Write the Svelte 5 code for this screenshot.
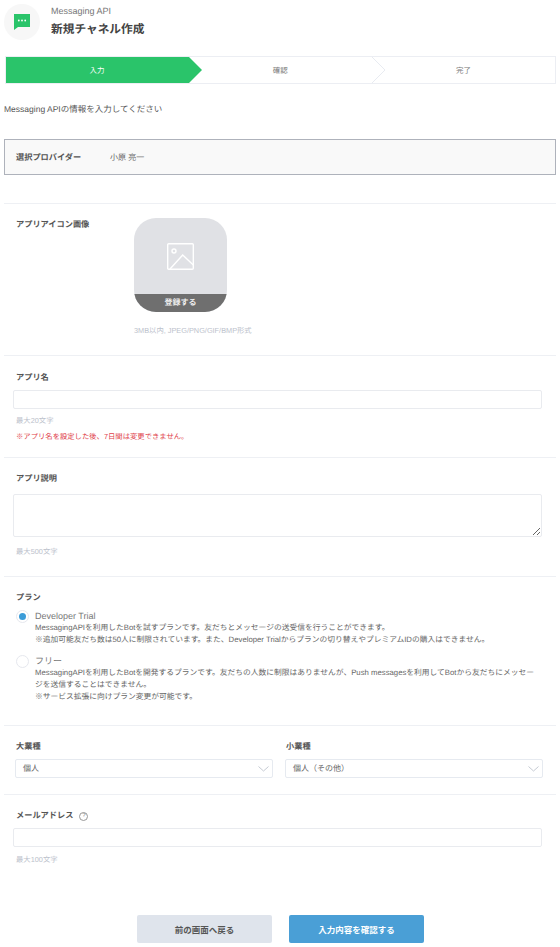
<script>
	const steps = [
		{ label: '入力', active: true },
		{ label: '確認', active: false },
		{ label: '完了', active: false }
	];
</script>

<div class="page">
	<header class="head">
		<div class="logo">
			<svg width="16" height="16" viewBox="0 0 16 16" aria-hidden="true">
				<path d="M0 0H16V13H4L0 16Z" fill="#2ac46a" />
				<circle cx="4.8" cy="6.5" r="0.9" fill="#fff" />
				<circle cx="8" cy="6.5" r="0.9" fill="#fff" />
				<circle cx="11.2" cy="6.5" r="0.9" fill="#fff" />
			</svg>
		</div>
		<div>
			<div class="head-sub">Messaging API</div>
			<h1>新規チャネル作成</h1>
		</div>
	</header>

	<div class="steps">
		{#each steps as step, i}
			<div class="step" class:active={step.active}>
				<span>{step.label}</span>
				{#if i === 0}
					<svg class="tip" width="13" height="26" viewBox="0 0 13 26" aria-hidden="true">
						<path d="M0 0L13 13L0 26Z" fill="#2ac46a" />
					</svg>
				{:else if i === 1}
					<svg class="tip" width="13" height="26" viewBox="0 0 13 26" aria-hidden="true">
						<path d="M0 0L13 13L0 26" fill="#fff" stroke="#e8ebf1" />
					</svg>
				{/if}
			</div>
		{/each}
	</div>

	<p class="lead">Messaging APIの情報を入力してください</p>

	<div class="provider">
		<span class="provider-label">選択プロバイダー</span>
		<span class="provider-name">小原 亮一</span>
	</div>

	<section class="sec sec-icon">
		<div class="label">アプリアイコン画像</div>
		<div>
			<div class="tile">
				<div class="tile-body">
					<svg width="27" height="27" viewBox="0 0 27 27" fill="none" stroke="#fff" stroke-width="1.4" aria-hidden="true">
						<rect x="0.7" y="0.7" width="25.6" height="25.6" rx="1" />
						<circle cx="7" cy="8" r="2" />
						<path d="M3 26L15.7 12L26.3 22" />
					</svg>
				</div>
				<div class="tile-band">登録する</div>
			</div>
			<div class="hint tile-hint">3MB以内, JPEG/PNG/GIF/BMP形式</div>
		</div>
	</section>

	<section class="sec sec-name">
		<div class="label">アプリ名</div>
		<input class="field" type="text" />
		<div class="hint">最大20文字</div>
		<div class="warn">※アプリ名を設定した後、7日間は変更できません。</div>
	</section>

	<section class="sec sec-desc">
		<div class="label">アプリ説明</div>
		<textarea class="field area"></textarea>
		<div class="hint">最大500文字</div>
	</section>

	<section class="sec sec-plan">
		<div class="label">プラン</div>
		<div class="plan">
			<span class="radio on"></span>
			<div class="plan-text">
				<div class="plan-name">Developer Trial</div>
				<div>MessagingAPIを利用したBotを試すプランです。友だちとメッセージの送受信を行うことができます。</div>
				<div>※追加可能友だち数は50人に制限されています。また、Developer Trialからプランの切り替えやプレミアムIDの購入はできません。</div>
			</div>
		</div>
		<div class="plan plan-free">
			<span class="radio"></span>
			<div class="plan-text">
				<div class="plan-name">フリー</div>
				<div>MessagingAPIを利用したBotを開発するプランです。友だちの人数に制限はありませんが、Push messagesを利用してBotから友だちにメッセージを送信することはできません。</div>
				<div>※サービス拡張に向けプラン変更が可能です。</div>
			</div>
		</div>
	</section>

	<section class="sec sec-biz">
		<div class="col">
			<div class="label">大業種</div>
			<div class="select">
				<span>個人</span>
				<svg width="11" height="6" viewBox="0 0 11 6" fill="none" stroke="#c5cad3" aria-hidden="true"><path d="M0.5 0.5L5.5 5L10.5 0.5" /></svg>
			</div>
		</div>
		<div class="col">
			<div class="label">小業種</div>
			<div class="select">
				<span>個人（その他）</span>
				<svg width="11" height="6" viewBox="0 0 11 6" fill="none" stroke="#c5cad3" aria-hidden="true"><path d="M0.5 0.5L5.5 5L10.5 0.5" /></svg>
			</div>
		</div>
	</section>

	<section class="sec sec-mail">
		<div class="label label-help">
			メールアドレス
			<span class="help">?</span>
		</div>
		<input class="field" type="text" />
		<div class="hint">最大100文字</div>
	</section>

	<div class="actions">
		<button type="button" class="btn btn-back">前の画面へ戻る</button>
		<button type="button" class="btn btn-next">入力内容を確認する</button>
	</div>
</div>

<style>
	:global(body) {
		background: #fff;
	}
	.page {
		width: 560px;
		height: 947px;
		overflow: hidden;
		font-family: 'Liberation Sans', 'Noto Sans CJK JP', sans-serif;
		font-size: 8px;
		color: #555;
		text-rendering: geometricPrecision;
	}
	.head {
		display: flex;
		align-items: flex-start;
		gap: 11px;
		padding: 4px 4px 0;
		height: 52px;
		box-sizing: border-box;
	}
	.logo {
		display: flex;
		align-items: center;
		justify-content: center;
		width: 36px;
		height: 36px;
		border-radius: 50%;
		background: #f7f7f7;
	}
	.head-sub {
		margin-top: 2px;
		font-size: 9px;
		line-height: 11px;
		color: #777;
	}
	h1 {
		margin: 5px 0 0;
		font-size: 11.7px;
		line-height: 16px;
		font-weight: 700;
		color: #444;
	}
	.steps {
		display: flex;
		margin: 4px 4px 0 4.5px;
		height: 28px;
		box-sizing: border-box;
		border: 1px solid #eceef3;
	}
	.step {
		position: relative;
		flex: 1;
		display: flex;
		align-items: center;
		justify-content: center;
		font-size: 7.5px;
		color: #777;
	}
	.step.active {
		background: #2ac46a;
		color: #fff;
	}
	.tip {
		position: absolute;
		top: 0;
		left: 100%;
		z-index: 1;
	}
	.lead {
		margin: 19px 0 0 4px;
		font-size: 8.5px;
		line-height: 12px;
		color: #555;
	}
	.provider {
		display: flex;
		align-items: center;
		height: 36px;
		margin: 24px 4px 0;
		padding-left: 11px;
		box-sizing: border-box;
		border: 1px solid #aeb2bb;
		background: #f9f9f9;
	}
	.provider-label {
		width: 94px;
		font-weight: 700;
		font-size: 8.2px;
		color: #555;
	}
	.provider-name {
		font-size: 8px;
		color: #666;
	}
	.sec {
		margin: 0 4px;
		padding-left: 9px;
		padding-right: 14px;
		border-top: 1px solid #eef0f4;
		box-sizing: border-box;
	}
	.label {
		margin-left: 3px;
		font-size: 8.2px;
		line-height: 12px;
		font-weight: 700;
		color: #555;
	}
	.hint {
		margin-left: 3px;
		font-size: 7.33px;
		line-height: 10px;
		color: #bcc2cc;
	}
	.field {
		display: block;
		width: 529px;
		height: 19px;
		box-sizing: border-box;
		margin: 0;
		padding: 0 6px;
		background: #fff;
		border: 1px solid #e9ebef;
		border-radius: 2px;
		outline: none;
	}
	.area {
		height: 43px;
		resize: vertical;
	}
	.sec-icon {
		display: flex;
		margin-top: 28px;
		height: 152px;
		padding-top: 14px;
	}
	.sec-icon .label {
		width: 118px;
		margin-top: 1px;
		flex: none;
	}
	.tile {
		width: 93px;
		height: 94px;
		border-radius: 22px;
		overflow: hidden;
		display: flex;
		flex-direction: column;
		background: #e0e1e5;
	}
	.tile-body {
		flex: 1;
		display: flex;
		align-items: center;
		justify-content: center;
		padding-top: 1px;
	}
	.tile-band {
		height: 18px;
		line-height: 18px;
		text-align: center;
		font-size: 8px;
		font-weight: 700;
		color: #eee;
		background: #6f6f6f;
	}
	.tile-hint {
		margin: 14px 0 0;
	}
	.sec-name {
		height: 102px;
		padding-top: 16px;
	}
	.sec-name .field {
		margin-top: 6px;
	}
	.sec-name .hint {
		margin-top: 7px;
	}
	.warn {
		margin: 6px 0 0 3px;
		font-size: 7.33px;
		line-height: 10px;
		color: #e0404a;
	}
	.sec-desc {
		height: 119px;
		padding-top: 15px;
	}
	.sec-desc .field {
		margin-top: 9px;
	}
	.sec-desc .hint {
		margin-top: 10px;
	}
	.sec-plan {
		height: 149px;
		padding-top: 15px;
		padding-right: 0;
	}
	.plan {
		position: relative;
		margin-top: 6px;
		padding-left: 22px;
	}
	.plan-free {
		margin-top: 8.5px;
	}
	.plan-text {
		width: 503px;
		font-size: 7.75px;
		line-height: 12px;
		color: #666;
	}
	.plan-name {
		font-size: 9px;
		line-height: 12px;
		color: #777;
	}
	.radio {
		position: absolute;
		left: 3px;
		top: 0;
		width: 13px;
		height: 13px;
		box-sizing: border-box;
		border: 1px solid #e6e8ee;
		border-radius: 50%;
		background: #fff;
	}
	.radio.on::after {
		content: '';
		position: absolute;
		left: 2px;
		top: 2px;
		width: 7px;
		height: 7px;
		border-radius: 50%;
		background: #3b9cd8;
	}
	.sec-biz {
		display: flex;
		gap: 12px;
		height: 69px;
		padding: 15px 0 0 11px;
	}
	.col {
		width: 258px;
	}
	.col .label {
		margin-left: 1px;
	}
	.select {
		display: flex;
		align-items: center;
		justify-content: space-between;
		height: 19px;
		margin-top: 6px;
		padding: 0 2px 0 7px;
		box-sizing: border-box;
		background: #fff;
		border: 1px solid #e6eaf0;
		border-radius: 2px;
		font-size: 8px;
		color: #666;
	}
	.select svg {
		margin-right: 1px;
	}
	.sec-mail {
		padding-top: 15px;
	}
	.label-help {
		display: flex;
		align-items: center;
		gap: 6px;
	}
	.help {
		width: 9px;
		height: 9px;
		box-sizing: border-box;
		border: 1px solid #999;
		border-radius: 50%;
		font-size: 6px;
		line-height: 7px;
		font-weight: 400;
		text-align: center;
		color: #888;
	}
	.sec-mail .field {
		margin-top: 6px;
	}
	.sec-mail .hint {
		margin-top: 8px;
	}
	.actions {
		display: flex;
		justify-content: center;
		gap: 17px;
		margin-top: 50px;
		padding-left: 1px;
	}
	.btn {
		width: 135px;
		height: 28px;
		padding: 0;
		border: none;
		border-radius: 2px;
		font: inherit;
		font-size: 8.5px;
		font-weight: 700;
	}
	.btn-back {
		background: #dfe4ec;
		color: #555;
	}
	.btn-next {
		background: #4a9fd6;
		color: #fff;
	}
</style>
